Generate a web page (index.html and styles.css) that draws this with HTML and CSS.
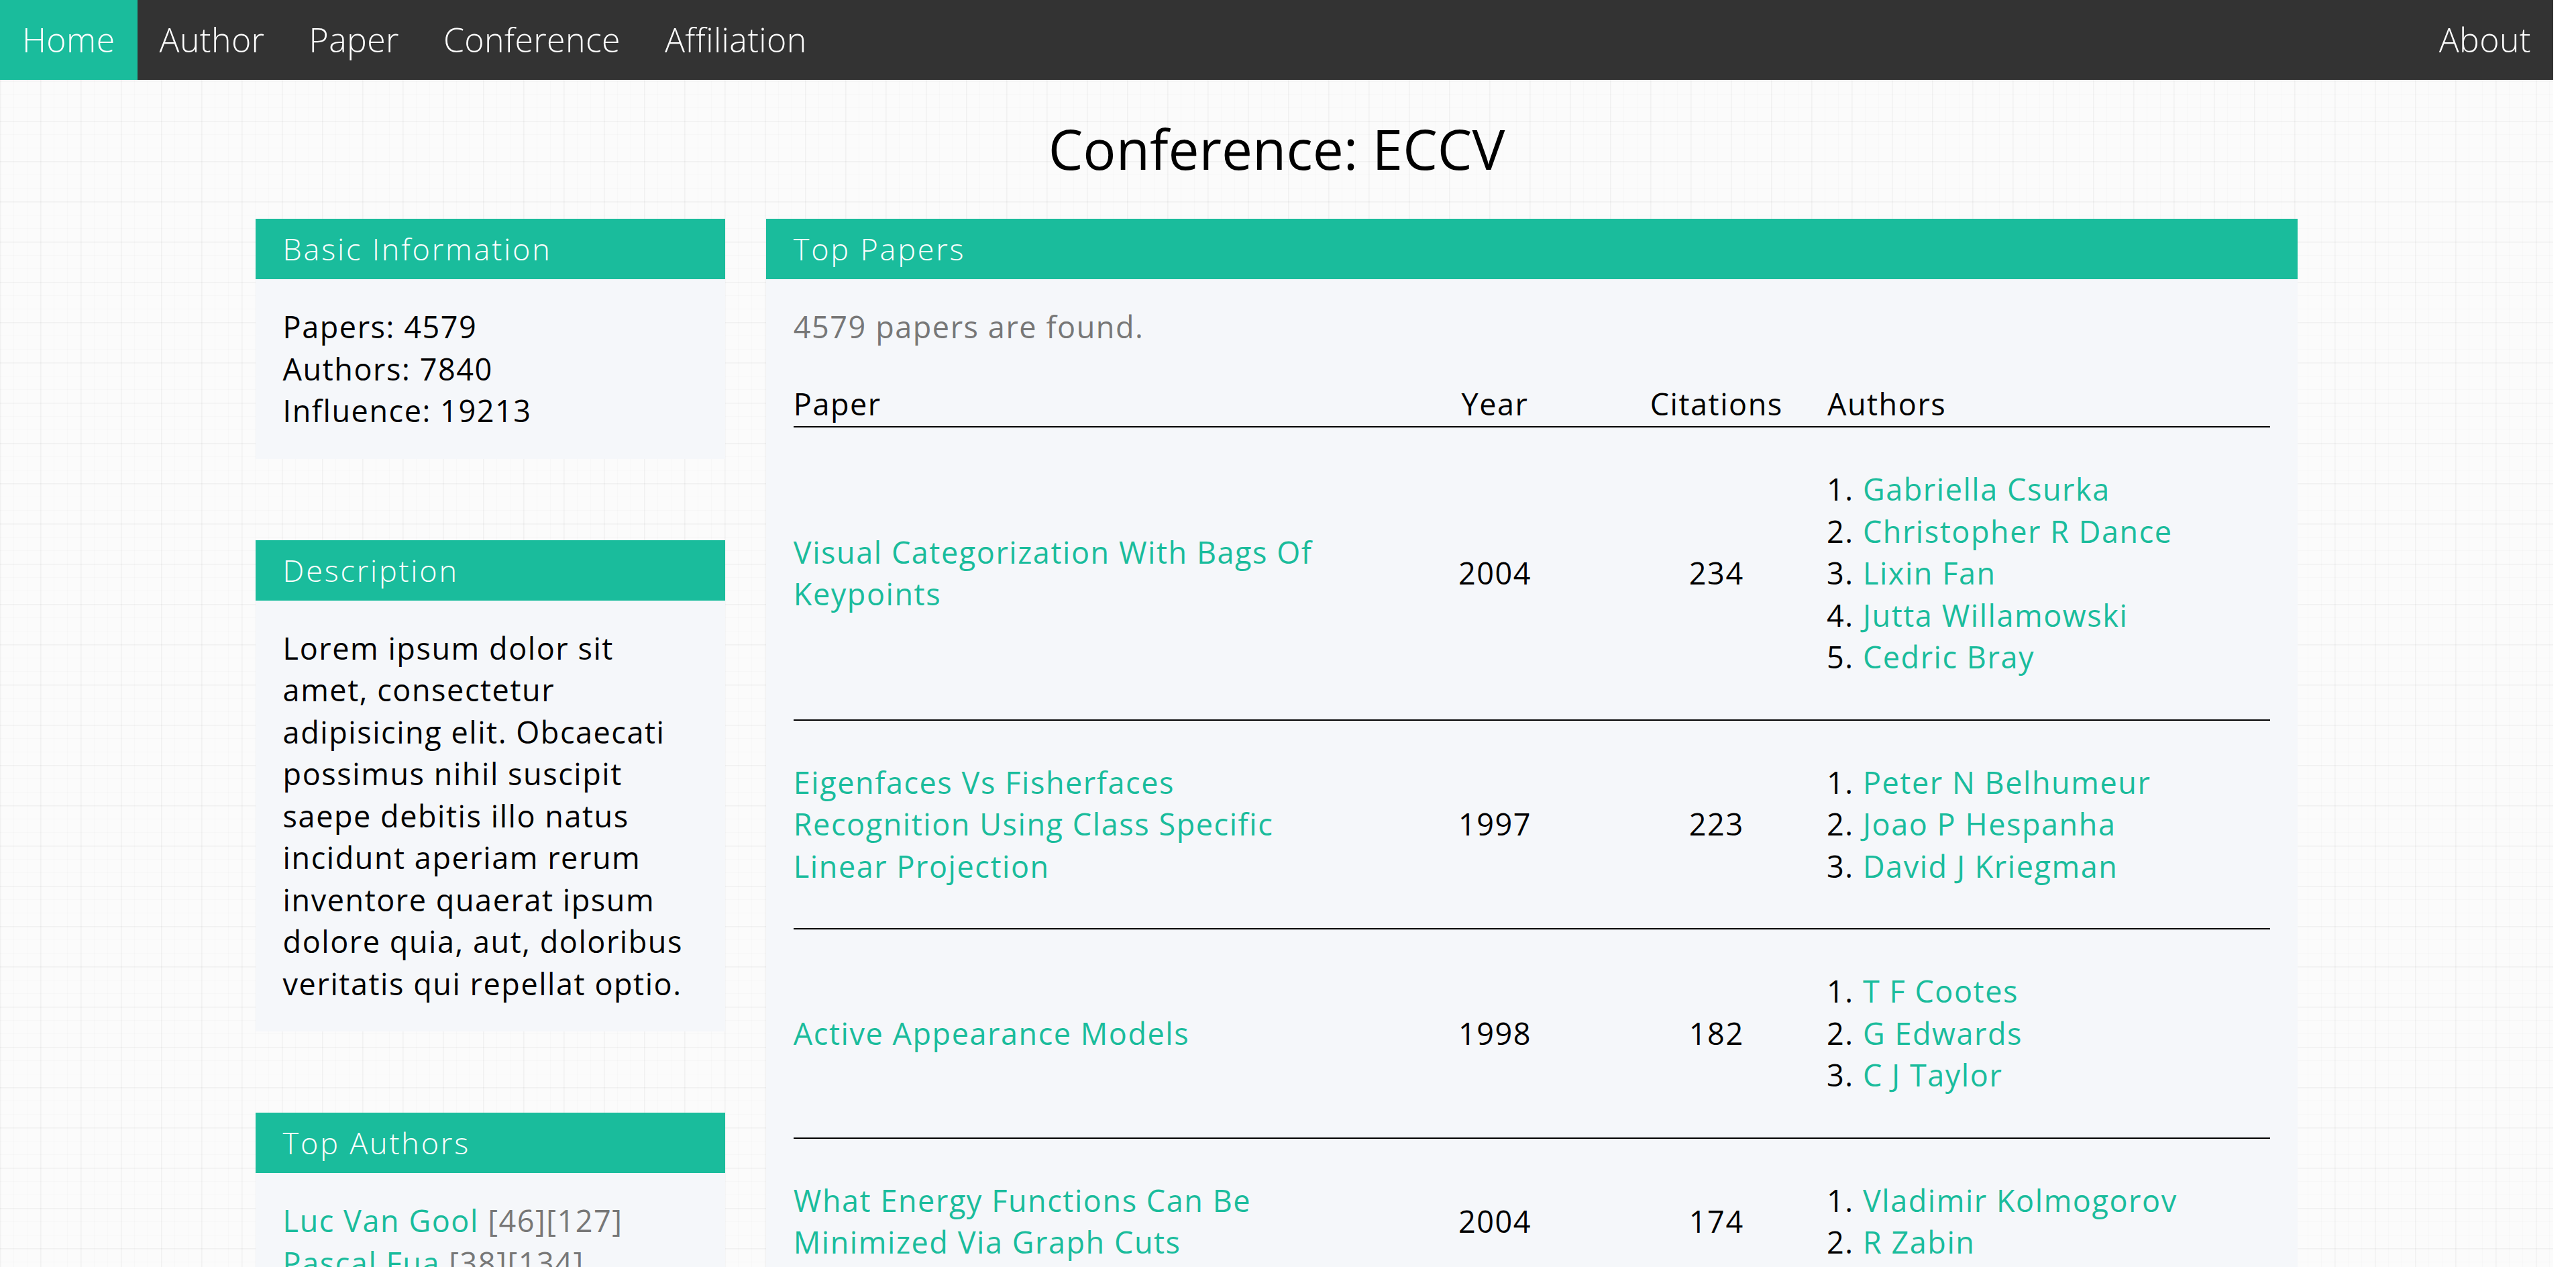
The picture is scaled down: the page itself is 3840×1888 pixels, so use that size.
FILE: index.html
```html
<!DOCTYPE html>
<html lang="en">
<head>
<meta charset="utf-8">
<title>Conference: ECCV</title>
<link rel="stylesheet" href="styles.css">
</head>
<body>
<div class="page">
  <nav class="navbar">
    <a class="nav-link active" href="#">Home</a>
    <a class="nav-link" href="#">Author</a>
    <a class="nav-link" href="#">Paper</a>
    <a class="nav-link" href="#">Conference</a>
    <a class="nav-link" href="#">Affiliation</a>
    <a class="nav-link nav-right" href="#">About</a>
  </nav>

  <h1 class="page-title">Conference: ECCV</h1>

  <div class="layout">
    <aside class="side">
      <section class="panel">
        <h2 class="panel-head">Basic Information</h2>
        <div class="panel-body">
          <div>Papers: 4579</div>
          <div>Authors: 7840</div>
          <div>Influence: 19213</div>
        </div>
      </section>

      <section class="panel">
        <h2 class="panel-head">Description</h2>
        <div class="panel-body">
          <p class="desc">Lorem ipsum dolor sit amet, consectetur adipisicing elit. Obcaecati possimus nihil suscipit saepe debitis illo natus incidunt aperiam rerum inventore quaerat ipsum dolore quia, aut, doloribus veritatis qui repellat optio.</p>
        </div>
      </section>

      <section class="panel">
        <h2 class="panel-head">Top Authors</h2>
        <div class="panel-body">
          <div><a href="#">Luc Van Gool</a> <span class="muted">[46][127]</span></div>
          <div><a href="#">Pascal Fua</a> <span class="muted">[38][134]</span></div>
        </div>
      </section>
    </aside>

    <main class="main">
      <section class="panel">
        <h2 class="panel-head">Top Papers</h2>
        <div class="panel-body">
          <p class="found">4579 papers are found.</p>
          <table class="papers">
            <colgroup>
              <col class="c-paper"><col class="c-year"><col class="c-cit"><col class="c-auth">
            </colgroup>
            <thead>
              <tr>
                <th class="t-left">Paper</th>
                <th>Year</th>
                <th>Citations</th>
                <th class="t-left">Authors</th>
              </tr>
            </thead>
            <tbody>
              <tr>
                <td class="title"><a href="#">Visual Categorization With Bags Of Keypoints</a></td>
                <td class="num">2004</td>
                <td class="num">234</td>
                <td><ol class="authors">
                  <li><a href="#">Gabriella Csurka</a></li>
                  <li><a href="#">Christopher R Dance</a></li>
                  <li><a href="#">Lixin Fan</a></li>
                  <li><a href="#">Jutta Willamowski</a></li>
                  <li><a href="#">Cedric Bray</a></li>
                </ol></td>
              </tr>
              <tr>
                <td class="title"><a href="#">Eigenfaces Vs Fisherfaces Recognition Using Class Specific Linear Projection</a></td>
                <td class="num">1997</td>
                <td class="num">223</td>
                <td><ol class="authors">
                  <li><a href="#">Peter N Belhumeur</a></li>
                  <li><a href="#">Joao P Hespanha</a></li>
                  <li><a href="#">David J Kriegman</a></li>
                </ol></td>
              </tr>
              <tr>
                <td class="title"><a href="#">Active Appearance Models</a></td>
                <td class="num">1998</td>
                <td class="num">182</td>
                <td><ol class="authors">
                  <li><a href="#">T F Cootes</a></li>
                  <li><a href="#">G Edwards</a></li>
                  <li><a href="#">C J Taylor</a></li>
                </ol></td>
              </tr>
              <tr>
                <td class="title"><a href="#">What Energy Functions Can Be Minimized Via Graph Cuts</a></td>
                <td class="num">2004</td>
                <td class="num">174</td>
                <td><ol class="authors">
                  <li><a href="#">Vladimir Kolmogorov</a></li>
                  <li><a href="#">R Zabin</a></li>
                </ol></td>
              </tr>
            </tbody>
          </table>
        </div>
      </section>
    </main>
  </div>
</div>
</body>
</html>
```

FILE: styles.css
```css
html, body {
  margin: 0;
  padding: 0;
  background: #ffffff;
}

body {
  font-family: "Open Sans", "Noto Sans", sans-serif;
  color: #000;
}

.page {
  width: calc(100% - 34px);
  min-height: 100vh;
  background-color: #fbfbfb;
  background-image:
    linear-gradient(rgba(0, 0, 0, 0.022) 2px, transparent 2px),
    linear-gradient(90deg, rgba(0, 0, 0, 0.022) 2px, transparent 2px),
    linear-gradient(rgba(0, 0, 0, 0.015) 1px, transparent 1px),
    linear-gradient(90deg, rgba(0, 0, 0, 0.015) 1px, transparent 1px);
  background-size: 60px 60px, 60px 60px, 20px 20px, 20px 20px;
  overflow: hidden;
}

a {
  color: #1abc9c;
  text-decoration: none;
}

/* navbar */
.navbar {
  display: flex;
  height: 119px;
  background: #333333;
}

.nav-link {
  display: block;
  padding: 0 33px;
  line-height: 119px;
  font-family: "Open Sans", sans-serif;
  font-weight: 300;
  font-size: 50px;
  letter-spacing: 0.4px;
  color: #ffffff;
}

.nav-link.active {
  background: #1abc9c;
}

.nav-right {
  margin-left: auto;
}

/* title */
.page-title {
  margin: 52px 0 55px;
  font-family: "Open Sans", sans-serif;
  font-weight: 400;
  font-size: 82px;
  line-height: 100px;
  text-align: center;
}

/* layout */
.layout {
  width: 80%;
  margin: 0 auto;
  display: flex;
  align-items: flex-start;
  gap: 2%;
}

.side {
  width: 23%;
  flex: none;
  display: flex;
  flex-direction: column;
  gap: 121px;
}

.main {
  width: 75%;
  flex: none;
}

/* panels */
.panel {
  font-size: 45px;
  line-height: 62.5px;
  letter-spacing: 1.55px;
}

.panel-head {
  margin: 0;
  padding: 14px 41px;
  height: 62px;
  background: #1abc9c;
  color: #ffffff;
  font-size: 45px;
  font-weight: 300;
  line-height: 62px;
  letter-spacing: 2.8px;
}

.panel-body {
  background: #f5f7fa;
  padding: 40px 41px;
}

.desc {
  margin: 0;
}

.muted {
  color: #777777;
}

.found {
  margin: 0 0 45px;
  color: #777777;
}

/* table */
.papers {
  width: 100%;
  border-collapse: collapse;
  table-layout: fixed;
}

.c-paper { width: 40%; }
.c-year { width: 15%; }
.c-cit { width: 15%; }
.c-auth { width: 30%; }

.papers th {
  font-weight: 400;
  text-align: center;
  padding: 7px 0 2px;
  border-bottom: 2px solid #000;
}

.papers th.t-left {
  text-align: left;
}

.papers td {
  padding: 16px 0;
  vertical-align: middle;
  border-bottom: 2px solid #000;
}

.papers td.title {
  padding-right: 40px;
}

.papers td.num {
  text-align: center;
}

.authors {
  margin: 45px 0;
  padding-left: 53px;
}
```
